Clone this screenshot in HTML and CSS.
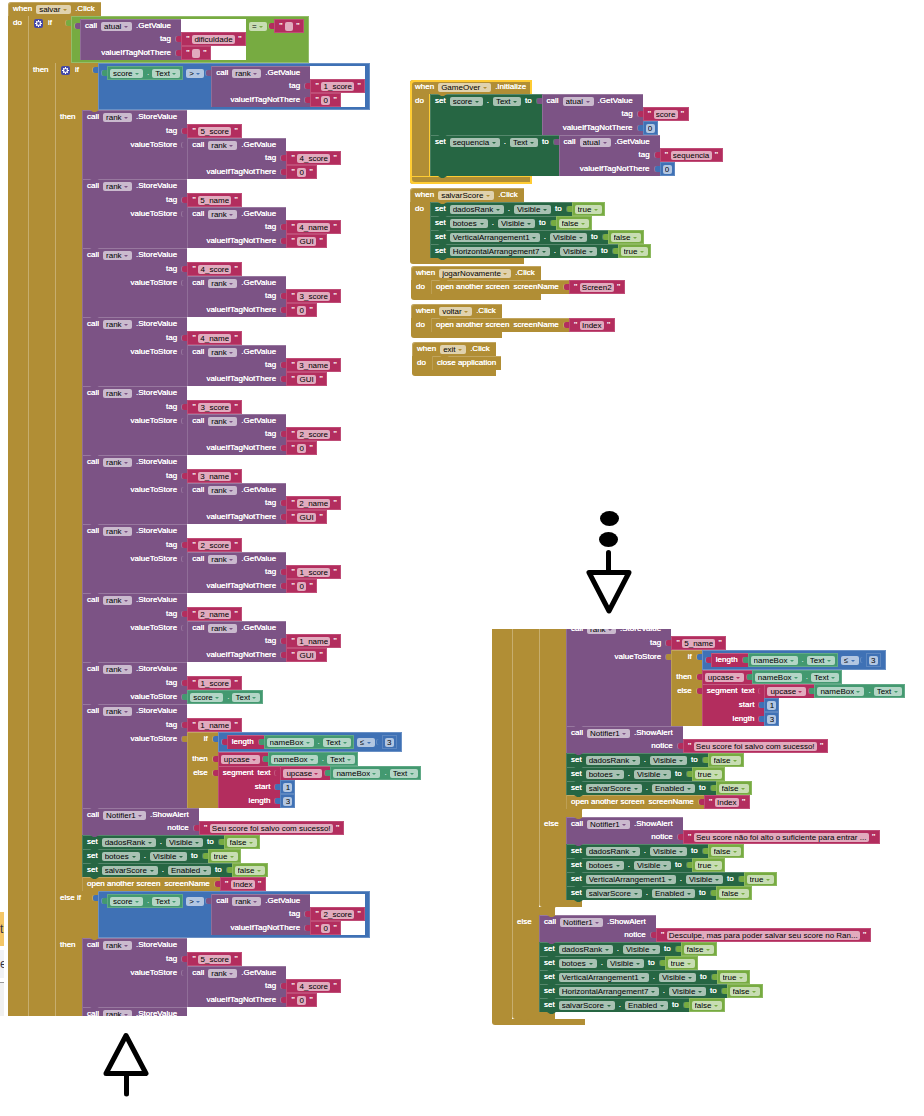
FILE: index.html
```html
<!DOCTYPE html>
<html lang="pt-BR">
<head>
<meta charset="utf-8">
<title>Blocks – ranking</title>
<link rel="stylesheet" href="styles.css">
</head>
<body>
<main class="workspace" aria-label="Blocks workspace">
  <aside class="edge-panel">
    <div class="edge-tab edge-tab-active">t</div>
    <div class="edge-tab">er</div>
    <div class="edge-foot"></div>
  </aside>

  <section class="fragment fragment-save" id="save"></section>
  <section class="fragment fragment-rest" id="rest"></section>
  <section class="node node-gameover" id="gameover"></section>
  <section class="node node-savescore" id="savescore"></section>
  <section class="node node-again" id="again"></section>
  <section class="node node-back" id="back"></section>
  <section class="node node-exit" id="exit"></section>

  <svg class="arrow arrow-down" width="46" height="104" viewBox="0 0 46 104" aria-hidden="true">
    <ellipse cx="23.5" cy="8.5" rx="9.5" ry="7.5"/>
    <ellipse cx="22.5" cy="29.5" rx="9.5" ry="7.5"/>
    <path d="M22.5 42.5V62" class="stroke"/>
    <path d="M3 62.5H43L23 101Z" class="stroke outline"/>
  </svg>
  <svg class="arrow arrow-up" width="46" height="66" viewBox="0 0 46 66" aria-hidden="true">
    <path d="M23 4.500L43 42.500H3Z" class="stroke outline"/>
    <path d="M23.500 44V63" class="stroke"/>
  </svg>
</main>
<script src="blocks.js"></script>
</body>
</html>
```

FILE: styles.css
```css
* { box-sizing: border-box; }

body {
  margin: 0;
  background: #fff;
  font-family: "Liberation Sans", Arial, sans-serif;
}

.workspace {
  position: relative;
  min-height: 100vh;
  overflow: hidden;
  font-size: 8px;
  line-height: 14px;
  color: #fff;
  white-space: nowrap;
}

/* places on the canvas */
.node, .fragment, .arrow, .edge-panel { position: absolute; }
.fragment { overflow: hidden; }
.fragment-save { left: 8px; top: 2px; width: 420px; height: 1014px; }
.fragment-rest {
  left: 492px;
  top: 629px;
  width: 420px;
  height: 396px;
  display: flex;
  flex-direction: column;
  justify-content: flex-end;
  align-items: flex-start;
}
.node-gameover { left: 410px; top: 80px; }
.node-savescore { left: 410px; top: 188px; }
.node-again { left: 411px; top: 266px; }
.node-back { left: 411px; top: 304px; }
.node-exit { left: 412px; top: 342px; }
.arrow-down { left: 586px; top: 510px; }
.arrow-up { left: 103px; top: 1031px; }

.stroke {
  fill: none;
  stroke: #000;
  stroke-width: 5;
  stroke-linecap: round;
  stroke-linejoin: round;
}
.outline { fill: #fff; }

/* slice of the side panel */
.edge-panel {
  left: 0;
  top: 912px;
  width: 4px;
  overflow: hidden;
  display: flex;
  flex-direction: column;
  gap: 4px;
  color: #334;
  font-size: 12px;
}
.edge-tab { height: 28px; line-height: 28px; background: #f1f2f5; }
.edge-tab-active { height: 34px; line-height: 34px; background: #f4c667; }
.edge-foot { height: 34px; background: #f0f0f0; border-top: 1px solid #999; }

/* colours */
.control { --c: #b18e35; }
.procedure { --c: #7c5385; }
.setter { --c: #266643; }
.getter { --c: #439970; }
.text { --c: #b32d5e; }
.math { --c: #3f71b5; }
.logic { --c: #77ab41; }

/* shared parts */
.label {
  display: flex;
  align-items: flex-start;
  gap: 4px;
  min-height: 14px;
  padding: 0 10px 0 5px;
  background: var(--c);
  text-shadow: 0 0 0 #fff;
}
.pick {
  position: relative;
  display: flex;
  height: 9px;
  margin-top: 3px;
  border-radius: 2px;
  background: #fff9;
  text-shadow: none;
}
.pick::after {
  content: "";
  position: absolute;
  right: 4px;
  top: 4px;
  border: 2px solid transparent;
  border-top-color: var(--c);
  border-bottom-width: 0;
  pointer-events: none;
}
.pick select {
  appearance: none;
  height: 9px;
  margin: 0;
  padding: 0 10px 0 3px;
  border: 0;
  background: none;
  color: #000;
  font: inherit;
  line-height: 9px;
}
.field {
  height: 9px;
  margin: 3px 0 0;
  padding: 0 2px;
  border: 0;
  border-radius: 2px;
  background: #fff9;
  color: #000;
  font: inherit;
  line-height: 9px;
  text-align: center;
}
.gear {
  width: 9px;
  height: 9px;
  margin: 3px 1px 0 1px;
  padding: 0;
  border: 0;
  border-radius: 2px;
  background: #4549a6;
}
.gear svg { display: block; }

/* blocks that plug in from the left */
.value { position: relative; }
.value::before {
  content: "";
  position: absolute;
  z-index: 1;
  left: -5px;
  top: 4px;
  width: 5px;
  height: 6px;
  border-radius: 2px 0 0 2px;
  background: var(--c);
  box-shadow: -1px 0 #fff3;
}

/* blocks that stack */
.stacked { position: relative; }
.stacked::after, .stack::before {
  content: "";
  position: absolute;
  z-index: 1;
  left: 8px;
  width: 9px;
  height: 2px;
  background: var(--c);
  clip-path: polygon(0 0, 100% 0, 65% 100%, 35% 100%);
}
.stacked::after { top: 100%; }
.stack::before { top: 0; }

/* one label column, one column of plugged-in blocks */
.external {
  display: grid;
  grid-template-columns: max-content max-content;
  width: max-content;
}
.external > .label {
  grid-column: 1;
  justify-content: flex-end;
  border-left: 1px solid #ffffff28;
  padding-left: 4px;
}
.external > .label:first-child { justify-content: flex-start; box-shadow: inset 0 1px #ffffff38; }
.external > .slot { grid-column: 2; }
.compact > .label:first-child { min-height: 13px; line-height: 13px; }
.choice > .label:first-child { justify-content: flex-end; }
.upcase > .label { padding: 0 8px 0 2px; }
.plain > .label { padding-right: 5px; }

/* single-line blocks */
.line {
  display: flex;
  width: max-content;
  height: 14px;
  padding: 0 3px;
  background: var(--c);
  box-shadow: inset 0 0 0 1px #ffffff28;
}
.dot { padding: 0 3px 0 4px; }
.quoted { gap: 3px; padding: 0 5px; }
.quote { width: 3px; font-weight: bold; text-align: center; }
.number { padding: 0 3px; }

/* comparison blocks hold both operands inside */
.compare {
  display: flex;
  align-items: flex-start;
  width: max-content;
  padding: 3px 5px 3px 9px;
  background: var(--c);
  box-shadow: inset 0 0 0 1px #ffffff38;
}
.compare > .pick { margin: 3px 7px 0 3px; }
.compare > .external { background: #fff; }

/* event handlers */
.event {
  display: flex;
  flex-direction: column;
  width: max-content;
}
.event-head {
  display: flex;
  gap: 4px;
  height: 14px;
  padding: 0 6px 0 5px;
  background: var(--c);
  border-radius: 3px 0 0 0;
  box-shadow: inset 1px 1px #ffffff38;
  text-shadow: 0 0 0 #fff;
}
.event-body {
  display: grid;
  grid-template-columns: 20px max-content;
  width: 0;
}
.event-body > .label { padding-right: 0; }
.event-foot { height: 6px; background: var(--c); border-radius: 0 0 0 3px; }
.continued { width: 93px; }
.stack { position: relative; }

/* if / then / else */
.branch { display: flex; flex-direction: column; width: max-content; }
.branch-row { display: grid; grid-template-columns: 27px max-content; }
.branch-test { grid-template-columns: 43px max-content; }
.branch-row > .label { padding-right: 0; border-left: 1px solid #ffffff48; padding-left: 4px; }
.branch-gap, .branch-foot { width: 43px; height: 8px; background: var(--c); border-left: 1px solid #ffffff48; }
.branch-foot { height: 7px; border-radius: 0 0 0 3px; }

/* selected handler */
.selected .event-head { box-shadow: inset 2px 2px #fc3, inset -2px 0 #fc3; }
.selected .event-body > .label { box-shadow: inset 2px 0 #fc3, inset -1px 0 #fc3; }
.selected .event-foot { height: 8px; box-shadow: inset 2px -2px #fc3, inset -2px 1px #fc3; }
```

FILE: blocks.js
```javascript
const ruler = document.createElement("canvas").getContext("2d");
ruler.font = '8px "Liberation Sans"';

function el(tag, cls, ...kids) {
  const node = document.createElement(tag);
  if (cls) node.className = cls;
  node.append(...kids);
  return node;
}

// fields
const word = (text) => el("span", "", text);

function pick(value) {
  const select = el("select", "", el("option", "", value));
  select.setAttribute("aria-label", value);
  return el("span", "pick", select);
}

function field(value, name) {
  const input = el("input", "field");
  input.value = value;
  input.setAttribute("aria-label", name);
  input.style.width = Math.max(8, Math.ceil(ruler.measureText(value).width) + 4) + "px";
  return input;
}

function gear() {
  const button = el("button", "gear");
  button.type = "button";
  button.setAttribute("aria-label", "Edit branches");
  button.innerHTML =
    '<svg width="9" height="9" viewBox="0 0 9 9"><circle cx="4.5" cy="4.5" r="2" fill="none" stroke="#fff" stroke-width="1.2"/>' +
    '<path d="M4.500 1v1.200M4.500 6.800V8M1 4.500h1.200M6.800 4.500H8M2 2l.9.9M6.100 6.100l.9.9M7 2l-.9.9M2.900 6.100l-.9.9" stroke="#fff"/></svg>';
  return button;
}

// value blocks
const str = (v) =>
  el("div", "text value line quoted", el("span", "quote", '"'), field(v, "text"), el("span", "quote", '"'));
const num = (v) => el("div", "math value line number", field(v, "number"));
const bool = (v) => el("div", "logic value line", pick(v));
const prop = (comp, name) =>
  el("div", "getter value line", pick(comp), el("span", "dot", "."), pick(name));
const compare = (kind, left, op, right) => el("div", kind + " value compare", left, pick(op), right);

// rows: [[label parts], plugged block or nothing]
function external(cls, rows) {
  const block = el("div", cls + " external");
  for (const [parts, value] of rows) {
    block.append(el("div", "label", ...parts));
    if (value) block.append(el("div", "slot", value));
  }
  return block;
}

const callHead = (comp, method) => [[word("call"), pick(comp), word("." + method)]];

const getValue = (comp, tag, fallback) =>
  external("procedure value compact", [
    callHead(comp, "GetValue"),
    [[word("tag")], tag],
    [[word("valueIfTagNotThere")], fallback],
  ]);
const length = (value) => external("text value", [[[word("length")], value]]);
const upcase = (value) => external("text value upcase", [[[pick("upcase")], value]]);

const shortName = () =>
  external("control value choice", [
    [[word("if")], compare("math", length(prop("nameBox", "Text")), "≤", num("3"))],
    [[word("then")], upcase(prop("nameBox", "Text"))],
    [[word("else")], external("text value", [
      [[word("segment"), word("text")], upcase(prop("nameBox", "Text"))],
      [[word("start")], num("1")],
      [[word("length")], num("3")],
    ])],
  ]);

// statement blocks
const store = (tag, value) =>
  external("procedure stacked", [
    callHead("rank", "StoreValue"),
    [[word("tag")], str(tag)],
    [[word("valueToStore")], value],
  ]);
const storeHead = () => external("procedure stacked", [callHead("rank", "StoreValue")]);
const alertBox = (text) =>
  external("procedure stacked compact", [callHead("Notifier1", "ShowAlert"), [[word("notice")], str(text)]]);
const set = (comp, name, value) =>
  external("setter stacked", [
    [[word("set"), pick(comp), word("."), pick(name), word("to")], value],
  ]);
const openScreen = (name) =>
  external("control stacked", [[[word("open another screen"), word("screenName")], str(name)]]);
const closeApp = () => external("control stacked plain", [[[word("close application")]]]);

const stack = (blocks) => el("div", "control stack", ...blocks);

// rows: {label, test} or {label, run}
function branch(rows, closed) {
  const block = el("div", "control stacked branch");
  rows.forEach((row, i) => {
    if (i && row.run && rows[i - 1].run) block.append(el("div", "branch-gap"));
    const parts = row.label ? [word(row.label)] : [];
    if (i === 0 && row.test) parts.unshift(gear());
    block.append(
      el("div", "branch-row" + (row.test ? " branch-test" : ""), el("div", "label", ...parts), row.test || stack(row.run))
    );
  });
  if (closed) block.append(el("div", "branch-foot"));
  return block;
}

function event(comp, name, blocks, cls = "") {
  return el("div", "control event " + cls,
    el("div", "event-head", word("when"), pick(comp), word("." + name)),
    el("div", "event-body", el("div", "label", word("do")), stack(blocks)),
    el("div", "event-foot"));
}

// lower end of an event whose head is out of view
function eventEnd(blocks) {
  return el("div", "control event continued",
    el("div", "event-body", el("div", "label"), stack(blocks)),
    el("div", "event-foot"));
}

const show = (id, block) => document.getElementById(id).append(block);

// program
const shift = (slot, from, fallback) => store(slot, getValue("rank", str(from), str(fallback)));
const beats = (place) =>
  compare("math", prop("score", "Text"), ">", getValue("rank", str(place), str("0")));
const saved = () => [
  alertBox("Seu score foi salvo com sucesso!"),
  set("dadosRank", "Visible", bool("false")),
  set("botoes", "Visible", bool("true")),
  set("salvarScore", "Enabled", bool("false")),
  openScreen("Index"),
];

show("save", event("salvar", "Click", [
  branch([
    { label: "if", test: compare("logic", getValue("atual", str("dificuldade"), str("")), "=", str("")) },
    { label: "then", run: [
      branch([
        { label: "if", test: beats("1_score") },
        { label: "then", run: [
          shift("5_score", "4_score", "0"),
          shift("5_name", "4_name", "GUI"),
          shift("4_score", "3_score", "0"),
          shift("4_name", "3_name", "GUI"),
          shift("3_score", "2_score", "0"),
          shift("3_name", "2_name", "GUI"),
          shift("2_score", "1_score", "0"),
          shift("2_name", "1_name", "GUI"),
          store("1_score", prop("score", "Text")),
          store("1_name", shortName()),
          ...saved(),
        ] },
        { label: "else if", test: beats("2_score") },
        { label: "then", run: [shift("5_score", "4_score", "0"), storeHead()] },
      ]),
    ] },
  ]),
]));

show("rest", eventEnd([
  branch([
    { label: "", run: [
      branch([
        { label: "", run: [store("5_name", shortName()), ...saved()] },
        { label: "else", run: [
          alertBox("Seu score não foi alto o suficiente para entrar ..."),
          set("dadosRank", "Visible", bool("false")),
          set("botoes", "Visible", bool("true")),
          set("VerticalArrangement1", "Visible", bool("true")),
          set("salvarScore", "Enabled", bool("false")),
        ] },
      ], true),
    ] },
    { label: "else", run: [
      alertBox("Desculpe, mas para poder salvar seu score no Ran..."),
      set("dadosRank", "Visible", bool("false")),
      set("botoes", "Visible", bool("true")),
      set("VerticalArrangement1", "Visible", bool("true")),
      set("HorizontalArrangement7", "Visible", bool("false")),
      set("salvarScore", "Enabled", bool("false")),
    ] },
  ], true),
]));

show("gameover", event("GameOver", "Initialize", [
  set("score", "Text", getValue("atual", str("score"), num("0"))),
  set("sequencia", "Text", getValue("atual", str("sequencia"), num("0"))),
], "selected"));

show("savescore", event("salvarScore", "Click", [
  set("dadosRank", "Visible", bool("true")),
  set("botoes", "Visible", bool("false")),
  set("VerticalArrangement1", "Visible", bool("false")),
  set("HorizontalArrangement7", "Visible", bool("true")),
]));

show("again", event("jogarNovamente", "Click", [openScreen("Screen2")]));
show("back", event("voltar", "Click", [openScreen("Index")]));
show("exit", event("exit", "Click", [closeApp()]));
```
